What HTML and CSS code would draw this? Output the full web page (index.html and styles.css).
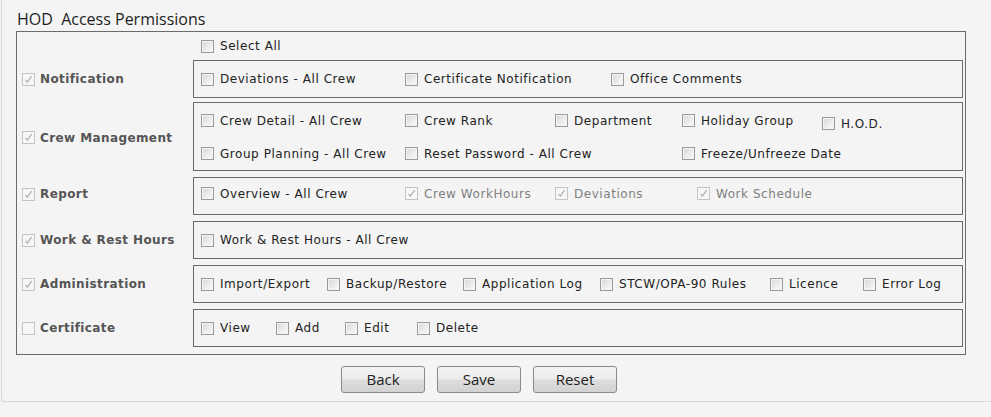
FILE: index.html
```html
<!DOCTYPE html>
<html>
<head>
<meta charset="utf-8">
<title>HOD Access Permissions</title>
<link rel="stylesheet" href="styles.css">
</head>
<body>
<div class="panel">
  <div class="title">HOD&nbsp; Access Permissions</div>
  <div class="box">
    <div class="row head">
      <div class="lbl"></div>
      <div class="selall"><span class="item"><span class="cb"></span>Select All</span></div>
    </div>

    <div class="row r-notif">
      <div class="lbl"><span class="cb dis"><svg viewBox="0 0 11 11"><path d="M2.5 5.8 L4.4 8.2 L8.6 2.2"/></svg></span>Notification</div>
      <div class="group g-notif">
        <span class="item"><span class="cb"></span>Deviations - All Crew</span>
        <span class="item"><span class="cb"></span>Certificate Notification</span>
        <span class="item"><span class="cb"></span>Office Comments</span>
      </div>
    </div>

    <div class="row r-crew">
      <div class="lbl lbl-crew"><span class="cb dis"><svg viewBox="0 0 11 11"><path d="M2.5 5.8 L4.4 8.2 L8.6 2.2"/></svg></span>Crew Management</div>
      <div class="group g-crew">
        <span class="item"><span class="cb"></span>Crew Detail - All Crew</span>
        <span class="item"><span class="cb"></span>Crew Rank</span>
        <span class="item"><span class="cb"></span>Department</span>
        <span class="item"><span class="cb"></span>Holiday Group</span>
        <span class="item hod"><span class="cb"></span>H.O.D.</span>
        <span class="item"><span class="cb"></span>Group Planning - All Crew</span>
        <span class="item"><span class="cb"></span>Reset Password - All Crew</span>
        <span class="item"></span>
        <span class="item"><span class="cb"></span>Freeze/Unfreeze Date</span>
      </div>
    </div>

    <div class="row">
      <div class="lbl lbl-report"><span class="cb dis"><svg viewBox="0 0 11 11"><path d="M2.5 5.8 L4.4 8.2 L8.6 2.2"/></svg></span>Report</div>
      <div class="group g-report">
        <span class="item"><span class="cb"></span>Overview - All Crew</span>
        <span class="item off"><span class="cb dis"><svg viewBox="0 0 11 11"><path d="M2.5 5.8 L4.4 8.2 L8.6 2.2"/></svg></span>Crew WorkHours</span>
        <span class="item off"><span class="cb dis"><svg viewBox="0 0 11 11"><path d="M2.5 5.8 L4.4 8.2 L8.6 2.2"/></svg></span>Deviations</span>
        <span class="item off"><span class="cb dis"><svg viewBox="0 0 11 11"><path d="M2.5 5.8 L4.4 8.2 L8.6 2.2"/></svg></span>Work Schedule</span>
      </div>
    </div>

    <div class="row">
      <div class="lbl"><span class="cb dis"><svg viewBox="0 0 11 11"><path d="M2.5 5.8 L4.4 8.2 L8.6 2.2"/></svg></span>Work &amp; Rest Hours</div>
      <div class="group g-wrh">
        <span class="item"><span class="cb"></span>Work &amp; Rest Hours - All Crew</span>
      </div>
    </div>

    <div class="row">
      <div class="lbl"><span class="cb dis"><svg viewBox="0 0 11 11"><path d="M2.5 5.8 L4.4 8.2 L8.6 2.2"/></svg></span>Administration</div>
      <div class="group g-admin">
        <span class="item"><span class="cb"></span>Import/Export</span>
        <span class="item"><span class="cb"></span>Backup/Restore</span>
        <span class="item"><span class="cb"></span>Application Log</span>
        <span class="item"><span class="cb"></span>STCW/OPA-90 Rules</span>
        <span class="item"><span class="cb"></span>Licence</span>
        <span class="item"><span class="cb"></span>Error Log</span>
      </div>
    </div>

    <div class="row">
      <div class="lbl"><span class="cb dis"></span>Certificate</div>
      <div class="group g-cert">
        <span class="item"><span class="cb"></span>View</span>
        <span class="item"><span class="cb"></span>Add</span>
        <span class="item"><span class="cb"></span>Edit</span>
        <span class="item"><span class="cb"></span>Delete</span>
      </div>
    </div>
  </div>

  <div class="actions">
    <button class="btn">Back</button>
    <button class="btn">Save</button>
    <button class="btn">Reset</button>
  </div>
</div>
</body>
</html>
```

FILE: styles.css
```css
html, body {
  margin: 0;
  padding: 0;
  background: #f4f4f4;
}

body {
  font-family: "DejaVu Sans", Verdana, sans-serif;
  font-size: 12px;
  color: #222;
}

.panel {
  margin-left: 1px;
  width: 990px;
  height: 402px;
  box-sizing: border-box;
  border-left: 1px solid #d9d9d9;
  border-bottom: 1px solid #d9d9d9;
  border-bottom-left-radius: 3px;
}

.title {
  font-family: "Open Sans", "Noto Sans", sans-serif;
  font-size: 16px;
  line-height: 20px;
  color: #1e1e1e;
  padding: 9px 0 0 15px;
  height: 22px;
}

.box {
  margin-left: 14px;
  width: 950px;
  box-sizing: border-box;
  border: 1px solid #6b6b6b;
  padding: 0 2px 7px 0;
  display: flex;
  flex-direction: column;
}

.row {
  display: flex;
  margin-top: 6px;
}

.row.head {
  margin-top: 0;
  height: 28px;
}

.row.r-notif {
  margin-top: 0;
}

.row.r-crew {
  margin-top: 4px;
}

.lbl {
  width: 176px;
  flex: none;
  display: flex;
  align-items: center;
  padding-left: 5px;
  box-sizing: border-box;
  font-weight: bold;
  letter-spacing: 0.4px;
  color: #555;
}

.lbl-report {
  padding-bottom: 4px;
}

.lbl-crew {
  padding-top: 2px;
}

.lbl .cb {
  margin-right: 5px;
}

.selall {
  display: flex;
  align-items: center;
  padding-left: 8px;
}

.group {
  width: 770px;
  box-sizing: border-box;
  border: 1px solid #6b6b6b;
  height: 38px;
  padding-left: 7px;
  display: grid;
  align-items: center;
}

.item {
  display: flex;
  align-items: center;
  white-space: nowrap;
  letter-spacing: 0.55px;
  color: #222;
}

.item.off {
  color: #808080;
}

.item .cb {
  margin-right: 6px;
}

.cb {
  flex: none;
  width: 13px;
  height: 13px;
  box-sizing: border-box;
  border: 1px solid #9a9a9a;
  background: linear-gradient(135deg, #d6d6d6 0%, #ececec 55%, #fafafa 100%);
  box-shadow: inset 0 0 0 1px #f4f4f4;
  display: inline-flex;
  align-items: center;
  justify-content: center;
}

.cb.dis {
  border-color: #c4c4c4;
  background: #f7f7f7;
  box-shadow: none;
}

.cb svg {
  width: 11px;
  height: 11px;
  display: block;
}

.cb svg path {
  fill: none;
  stroke: #b3b3b3;
  stroke-width: 1.3;
}

.g-notif {
  grid-template-columns: 204px 206px auto;
}

.g-crew {
  height: 69px;
  grid-template-columns: 204px 150px 127px 140px auto;
  grid-auto-rows: 17px;
  row-gap: 16px;
  align-content: start;
  padding-top: 9px;
}

.item.hod {
  position: relative;
  top: 3px;
}

.g-report {
  grid-template-columns: 204px 150px 142px auto;
  padding-bottom: 5px;
}

.g-wrh {
  grid-template-columns: auto;
}

.g-admin {
  grid-template-columns: 126px 136px 137px 170px 93px auto;
}

.g-cert {
  grid-template-columns: 75px 69px 72px auto;
}

.actions {
  display: flex;
  gap: 12px;
  padding: 11px 0 0 339px;
}

.btn {
  width: 84px;
  height: 27px;
  box-sizing: border-box;
  border: 1px solid #8a8a8a;
  border-radius: 3px;
  background: linear-gradient(to bottom, #f3f3f3 0%, #ececec 48%, #dddddd 52%, #d2d2d2 100%);
  font-family: "Open Sans", "Noto Sans", sans-serif;
  font-size: 15px;
  color: #222;
  padding: 0;
  line-height: 25px;
}
```
